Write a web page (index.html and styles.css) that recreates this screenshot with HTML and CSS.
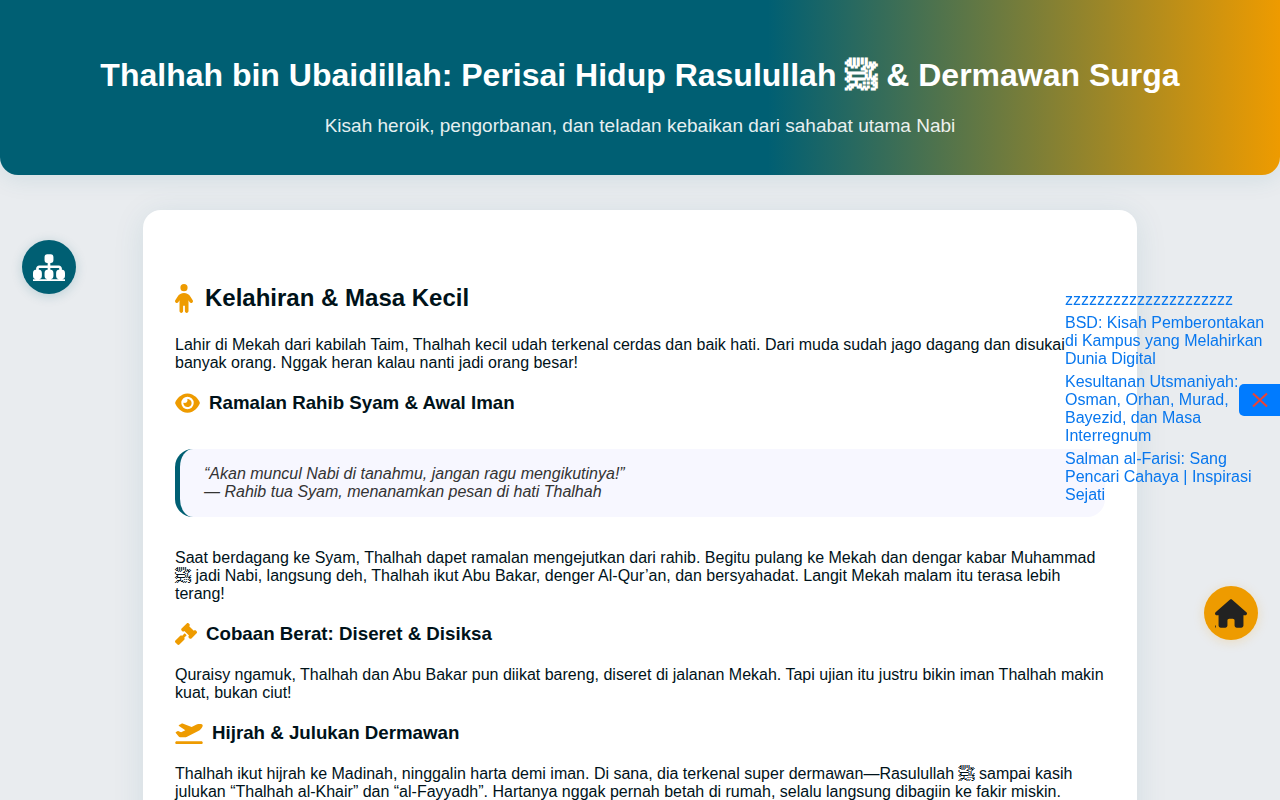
FILE: index.html
```html
<!DOCTYPE html>
<html lang="id">
<head>
<meta charset="utf-8">
<meta name="viewport" content="width=device-width, initial-scale=1">
<title>Thalhah bin Ubaidillah</title>
<link rel="stylesheet" href="styles.css">
</head>
<body>
<header class="hero">
  <h1 class="hero-title">Thalhah bin Ubaidillah: Perisai Hidup Rasulullah ﷺ &amp; Dermawan Surga</h1>
  <p class="hero-subtitle">Kisah heroik, pengorbanan, dan teladan kebaikan dari sahabat utama Nabi</p>
</header>

<main class="card">
  <h2 class="section-title">
    <svg class="icon icon-child" viewBox="0 0 320 512" aria-hidden="true"><path d="M96 64a64 64 0 1 1 128 0A64 64 0 1 1 96 64zm48 320v96c0 17.700-14.300 32-32 32s-32-14.300-32-32V287.800L59.100 321c-9.400 15-29.200 19.400-44.100 10S-4.500 301.900 4.900 287l39.900-63.300C69.700 184 113.200 160 160 160s90.300 24 115.200 63.600L315.100 287c9.400 15 4.900 34.700-10 44.100s-34.700 4.900-44.100-10L240 287.800V480c0 17.700-14.300 32-32 32s-32-14.300-32-32V384H144z"/></svg>
    Kelahiran &amp; Masa Kecil
  </h2>
  <p>Lahir di Mekah dari kabilah Taim, Thalhah kecil udah terkenal cerdas dan baik hati. Dari muda sudah jago dagang dan disukai banyak orang. Nggak heran kalau nanti jadi orang besar!</p>

  <h3 class="topic-title">
    <svg class="icon icon-eye" viewBox="0 0 576 512" aria-hidden="true"><path d="M288 32c-80.800 0-145.500 36.800-192.600 80.600C48.600 156 17.300 208 2.500 243.700c-3.300 7.900-3.300 16.700 0 24.600C17.300 304 48.600 356 95.400 399.400C142.500 443.200 207.200 480 288 480s145.500-36.800 192.600-80.600c46.800-43.500 78.100-95.400 93-131.100c3.300-7.900 3.300-16.700 0-24.600c-14.900-35.700-46.200-87.700-93-131.100C433.500 68.800 368.800 32 288 32zM144 256a144 144 0 1 1 288 0 144 144 0 1 1 -288 0zm144-64c0 35.300-28.700 64-64 64c-7.100 0-13.900-1.200-20.300-3.300c-5.500-1.800-11.900 1.600-11.700 7.400c.3 6.900 1.300 13.800 3.200 20.700c13.700 51.200 66.400 81.600 117.600 67.900s81.600-66.400 67.900-117.600c-11.100-41.500-47.800-69.400-88.600-71.100c-5.800-.2-9.200 6.100-7.400 11.700c2.100 6.400 3.300 13.200 3.300 20.300z"/></svg>
    Ramalan Rahib Syam &amp; Awal Iman
  </h3>
  <blockquote class="quote">“Akan muncul Nabi di tanahmu, jangan ragu mengikutinya!”<br>— Rahib tua Syam, menanamkan pesan di hati Thalhah</blockquote>
  <p>Saat berdagang ke Syam, Thalhah dapet ramalan mengejutkan dari rahib. Begitu pulang ke Mekah dan dengar kabar Muhammad ﷺ jadi Nabi, langsung deh, Thalhah ikut Abu Bakar, denger Al-Qur’an, dan bersyahadat. Langit Mekah malam itu terasa lebih terang!</p>

  <h3 class="topic-title">
    <svg class="icon icon-gavel" viewBox="0 0 512 512" aria-hidden="true"><path d="M318.600 9.400c-12.500-12.500-32.800-12.500-45.300 0l-120 120c-12.500 12.500-12.500 32.800 0 45.300l16 16c12.500 12.500 32.800 12.500 45.300 0l4-4L325.400 293.400l-4 4c-12.500 12.500-12.500 32.800 0 45.300l16 16c12.500 12.500 32.800 12.500 45.300 0l120-120c12.500-12.500 12.500-32.800 0-45.300l-16-16c-12.500-12.500-32.800-12.500-45.300 0l-4 4L330.600 74.600l4-4c12.500-12.500 12.500-32.800 0-45.300l-16-16zm-152 288c-12.500-12.500-32.800-12.500-45.300 0l-112 112c-12.500 12.500-12.500 32.800 0 45.300l48 48c12.500 12.500 32.800 12.500 45.300 0l112-112c12.500-12.500 12.500-32.800 0-45.300l-1.400-1.400L272 285.300 226.700 240 168 298.700l-1.400-1.400z"/></svg>
    Cobaan Berat: Diseret &amp; Disiksa
  </h3>
  <p>Quraisy ngamuk, Thalhah dan Abu Bakar pun diikat bareng, diseret di jalanan Mekah. Tapi ujian itu justru bikin iman Thalhah makin kuat, bukan ciut!</p>

  <h3 class="topic-title">
    <svg class="icon icon-plane" viewBox="0 0 640 512" aria-hidden="true"><path d="M381 114.900L186.100 41.800c-16.700-6.200-35.200-5.300-51.100 2.700L89.100 67.400C78 73 77.200 88.500 87.600 95.200l146.900 94.500L136 240 77.800 214.100c-8.700-3.900-18.800-3.700-27.300 .6L18.300 230.800c-9.300 4.700-11.800 16.800-5 24.700l73.100 85.300c6.100 7.100 15 11.200 24.300 11.200H248.400c5 0 9.900-1.200 14.300-3.400L535.600 212.200c46.500-23.300 82.500-63.300 100.800-112C645.900 75 627.200 48 600.200 48H542.400c-20.200 0-40.200 4.800-58.200 14L381 114.900zM0 480c0 17.700 14.300 32 32 32H608c17.700 0 32-14.300 32-32s-14.300-32-32-32H32c-17.700 0-32 14.300-32 32z"/></svg>
    Hijrah &amp; Julukan Dermawan
  </h3>
  <p>Thalhah ikut hijrah ke Madinah, ninggalin harta demi iman. Di sana, dia terkenal super dermawan—Rasulullah ﷺ sampai kasih julukan “Thalhah al-Khair” dan “al-Fayyadh”. Hartanya nggak pernah betah di rumah, selalu langsung dibagiin ke fakir miskin.</p>
</main>

<a class="fab fab-map" href="#" aria-label="Peta situs">
  <svg class="fab-icon" viewBox="0 0 576 512" aria-hidden="true"><path d="M208 70c0-34 16-54 48-54h64c32 0 48 20 48 54v52c0 34-16 54-48 54h-8v42H464c30.900 0 56 25.100 56 56v24h8c32 0 48 24 48 60v48c0 36-16 60-48 60h-64c-32 0-48-24-48-60v-48c0-36 16-60 48-60h8v-24c0-4.400-3.600-8-8-8H312v32h8c32 0 48 24 48 60v48c0 36-16 60-48 60h-64c-32 0-48-24-48-60v-48c0-36 16-60 48-60h8v-32H112c-4.400 0-8 3.600-8 8v24h8c32 0 48 24 48 60v48c0 36-16 60-48 60H48c-32 0-48-24-48-60v-48c0-36 16-60 48-60h8v-24c0-30.900 25.100-56 56-56H264V176h-8c-32 0-48-20-48-54V70zM0 468h576v32H0z"/></svg>
</a>

<nav class="related" aria-label="Artikel terkait">
  <a href="#">zzzzzzzzzzzzzzzzzzzzz</a>
  <a href="#">BSD: Kisah Pemberontakan di Kampus yang Melahirkan Dunia Digital</a>
  <a href="#">Kesultanan Utsmaniyah: Osman, Orhan, Murad, Bayezid, dan Masa Interregnum</a>
  <a href="#">Salman al-Farisi: Sang Pencari Cahaya | Inspirasi Sejati</a>
</nav>
<button class="related-toggle" type="button" aria-label="Tutup">
  <svg class="close-icon" viewBox="0 0 16 16" aria-hidden="true"><path d="M1 1.500L15 14.500M15 1.500L1 14.500"/></svg>
</button>

<a class="fab fab-home" href="#" aria-label="Beranda">
  <svg class="fab-icon" viewBox="0 0 576 512" aria-hidden="true"><path d="M575.800 255.500c0 18-15 32.100-32 32.100h-32l.7 160.200c0 2.700-.2 5.400-.5 8.100V472c0 22.100-17.900 40-40 40H456c-1.100 0-2.200 0-3.300-.1c-1.400 .1-2.800 .1-4.200 .1H416 392c-22.100 0-40-17.900-40-40V448 384c0-17.700-14.300-32-32-32H256c-17.700 0-32 14.300-32 32v64 24c0 22.100-17.900 40-40 40H160 128.100c-1.500 0-3-.1-4.500-.2c-1.200 .1-2.400 .2-3.600 .2H104c-22.100 0-40-17.900-40-40V360c0-.9 0-1.900 .1-2.800V287.600H32c-18 0-32-14-32-32.100c0-9 3-17 10-24L266.400 8c7-7 15-8 22-8s15 2 21 7L564.800 231.500c8 7 12 15 11 24zM0 472h14v36H0z"/></svg>
</a>
</body>
</html>
```

FILE: styles.css
```css
* {
  box-sizing: border-box;
}

body {
  margin: 0;
  background: #e9ecef;
  color: #001219;
  font-family: "Liberation Sans", Arial, Unifont, "WenQuanYi Zen Hei", sans-serif;
  font-size: 16px;
  line-height: 18px;
}

.hero {
  padding: 56px 16px 38px;
  border-radius: 0 0 18px 18px;
  background: linear-gradient(90deg, #005f73 60%, #ee9b00 100%);
  box-shadow: 0 4px 24px rgba(0, 95, 115, 0.1);
  color: #fff;
  text-align: center;
}

.hero-title {
  margin: 0 0 20px;
  font-size: 32px;
  line-height: 38px;
}

.hero-subtitle {
  margin: 0;
  font-size: 19px;
  line-height: 23px;
  opacity: 0.9;
}

.card {
  width: calc(100% - 32px);
  max-width: 994px;
  margin: 35px auto;
  padding: 72px 32px 32px;
  border-radius: 18px;
  background: #fff;
  box-shadow: 0 4px 32px rgba(0, 95, 115, 0.1);
}

.card p {
  margin: 16px 0;
}

.section-title,
.topic-title {
  display: flex;
  align-items: center;
}

.section-title {
  gap: 12px;
  margin: 0 0 22px;
  font-size: 24px;
  line-height: 32px;
}

.topic-title {
  gap: 9px;
  margin: 18px 0 20px;
  line-height: 25px;
}

.icon {
  flex: none;
  height: 22px;
  fill: #ee9b00;
}

.icon-child {
  width: 18px;
  height: 29px;
}

.icon-eye {
  width: 25px;
}

.icon-gavel {
  width: 22px;
}

.icon-plane {
  width: 28px;
}

.quote {
  margin: 34px 0 32px;
  padding: 16px 24px;
  border-left: 5px solid #005f73;
  border-radius: 18px;
  background: #f7f7ff;
  color: #333;
  font-style: italic;
}

.fab {
  position: fixed;
  display: flex;
  align-items: center;
  justify-content: center;
  width: 54px;
  height: 54px;
  border-radius: 50%;
}

.fab-icon {
  width: 32px;
  height: 29px;
  fill: currentColor;
}

.fab-map {
  top: 240px;
  left: 22px;
  background: #005f73;
  box-shadow: 0 2px 12px rgba(0, 95, 115, 0.2);
  color: #fff;
}

.fab-home {
  right: 22px;
  bottom: 160px;
  background: #ee9b00;
  box-shadow: 0 2px 12px rgba(238, 155, 0, 0.2);
  color: #222;
}

.related {
  position: fixed;
  top: 50%;
  right: 0;
  display: flex;
  flex-direction: column;
  gap: 5px;
  width: 215px;
  padding: 0 15px 5px 0;
  transform: translateY(-50%);
}

.related a {
  color: #0877ee;
  text-decoration: none;
}

.related-toggle {
  position: fixed;
  top: 50%;
  right: 0;
  display: flex;
  align-items: center;
  justify-content: center;
  width: 41px;
  height: 32px;
  padding: 0;
  border: 0;
  border-radius: 5px 0 0 5px;
  background: #007bff;
  transform: translateY(-50%);
}

.close-icon {
  width: 16px;
  height: 16px;
  fill: none;
  stroke: #ea4335;
  stroke-width: 2;
}
```
